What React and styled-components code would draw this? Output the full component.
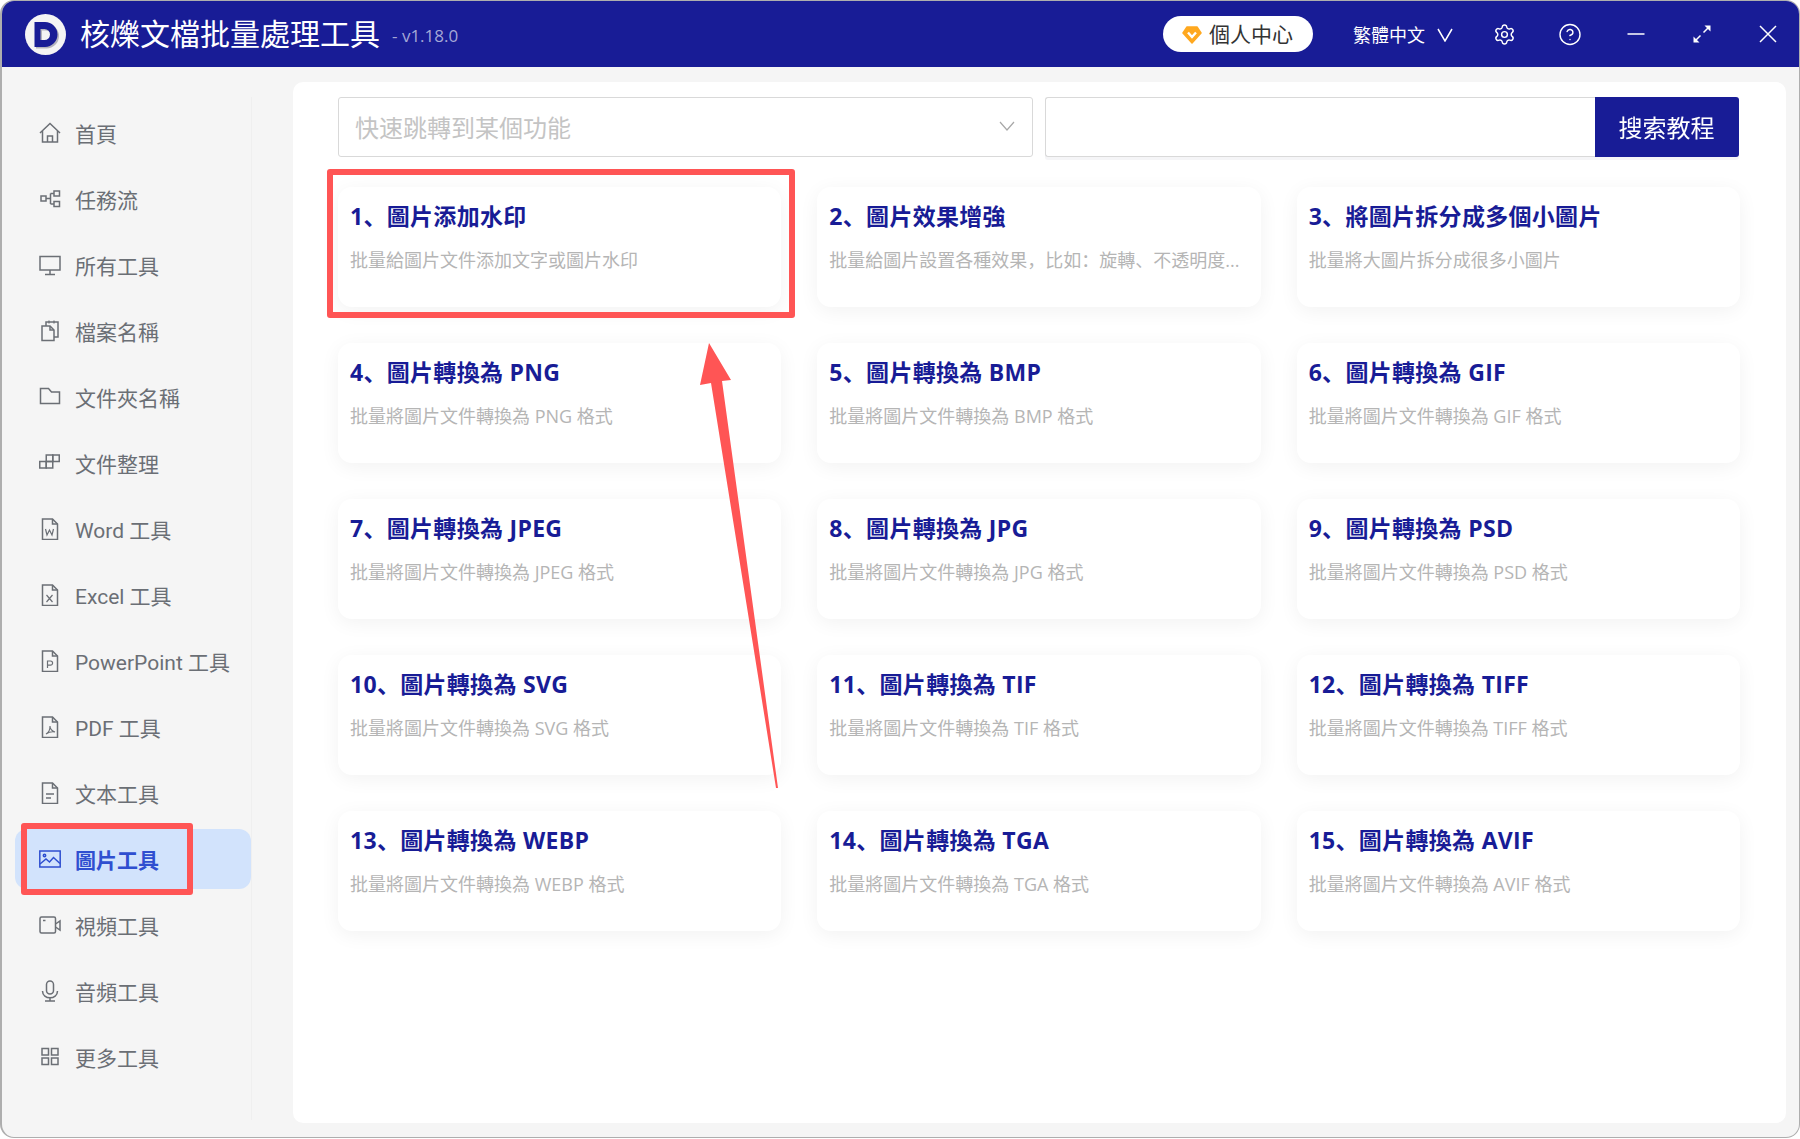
import React from 'react';
import styled, {createGlobalStyle} from 'styled-components';
import {Settings, CircleHelp} from 'lucide-react';

const GlobalStyle = createGlobalStyle`
  html, body {
    margin: 0;
    padding: 0;
    background: #fff;
  }
  * {
    box-sizing: border-box;
  }
`

const FONT = `"Open Sans", "Noto Sans CJK SC", sans-serif`
const NAVY = '#181c96'
const RED = '#ff5555'

const Page = styled.div`
  position: relative;
  width: 1800px;
  height: 1139px;
  font-family: ${FONT};
  overflow: hidden;
`
const Frame = styled.div`
  display: flex;
  flex-direction: column;
  height: 1138px;
  border: solid #aeaeae;
  border-width: 1px 1.5px 1.5px 2px;
  border-radius: 14px;
  background: #f5f5f5;
  overflow: hidden;
`
const TitleBar = styled.header`
  display: flex;
  align-items: center;
  flex: 0 0 66px;
  padding-left: 23px;
  background: ${NAVY};
  color: #fff;
`
const Logo = styled.svg`
  width: 41px;
  height: 41px;
  margin-right: 14px;
`
const AppName = styled.div`
  font-size: 30px;
  line-height: 40px;
`
const Version = styled.div`
  margin-left: 12px;
  margin-top: 3px;
  font-size: 17px;
  color: #a4a7d6;
`
const HeaderRight = styled.div`
  display: flex;
  align-items: center;
  margin-left: auto;
  padding-right: 19px;
`
const VipPill = styled.div`
  display: flex;
  align-items: center;
  gap: 7px;
  width: 150px;
  height: 36px;
  padding: 0 0 3px 19px;
  border-radius: 18px;
  background: #fff;
  color: #333;
  font-size: 21px;
`
const VipGem = styled.svg`
  width: 20px;
  height: 18px;
  margin-top: 4px;
`
const LangSwitch = styled.div`
  display: flex;
  align-items: center;
  gap: 12px;
  margin-left: 40px;
  margin-right: 39px;
  font-size: 18px;
`
const WinButton = styled.div`
  display: flex;
  align-items: center;
  justify-content: center;
  width: 24px;
  height: 24px;
  margin-right: 42px;

  &:last-child {
    margin-right: 0;
  }
`
const HeaderIcon = styled.svg`
  width: ${props => props.$size || 24}px;
  height: ${props => props.$size || 24}px;
  fill: none;
  stroke: #fff;
  stroke-width: 1.5;
`
const Body = styled.div`
  display: flex;
  flex: 1;
  min-height: 0;
`
const Sidebar = styled.nav`
  flex: 0 0 250px;
  height: 1023px;
  margin-top: 30px;
  padding: 6px 0 0 13px;
  border-right: 1px solid #efefef;
`
const NavItem = styled.div`
  position: relative;
  display: flex;
  align-items: center;
  gap: 14px;
  width: 236px;
  height: 60px;
  margin-bottom: 6px;
  padding: 0 0 1px 24px;
  border-radius: 12px;
  background: ${props => props.$active ? '#d2e3fc' : 'transparent'};
  color: ${props => props.$active ? '#2f4fd0' : '#6b6f75'};
  font-family: Roboto, "Noto Sans CJK SC", sans-serif;
  font-size: 21px;
  font-weight: ${props => props.$active ? 700 : 400};
`
const NavIcon = styled.svg`
  flex: 0 0 22px;
  width: 22px;
  height: 22px;
  fill: none;
  stroke: currentColor;
  stroke-width: 1.5;
`
const Panel = styled.main`
  flex: 1;
  margin: 15px 13px 14px 41px;
  padding: 15px 45px 0;
  border-radius: 10px;
  background: #fff;
`
const SearchRow = styled.div`
  display: flex;
  gap: 12px;
  height: 60px;
`
const JumpSelect = styled.div`
  display: flex;
  align-items: center;
  justify-content: space-between;
  flex: 0 0 695px;
  padding: 0 17px 2px 16px;
  border: 1px solid #d9d9d9;
  border-radius: 3px;
  color: #c4c4c4;
  font-size: 24px;
`
const SearchBox = styled.div`
  display: flex;
  flex: 1;
  margin-right: 2.500px;
  filter: drop-shadow(0 3px 0 #f5f5f7);
`
const SearchInput = styled.div`
  flex: 1;
  border: 1px solid #d9d9d9;
  border-right: 0;
  border-radius: 3px 0 0 3px;
  background: #fff;
`
const SearchButton = styled.div`
  display: flex;
  align-items: center;
  justify-content: center;
  flex: 0 0 144px;
  padding-bottom: 2px;
  border-radius: 0 3px 3px 0;
  background: ${NAVY};
  color: #fff;
  font-size: 24px;
`
const ToolGrid = styled.div`
  display: grid;
  grid-template-columns: repeat(3, minmax(0, 1fr));
  grid-auto-rows: 120px;
  gap: 36px;
  margin: 30px 1px 0 0;
`
const ToolCard = styled.div`
  position: relative;
  padding: 11px 12px 0;
  border-radius: 14px;
  background: #fff;
  box-shadow: 0 4px 20px rgba(0, 0, 0, 0.055);
`
const ToolTitle = styled.div`
  font-size: 23px;
  letter-spacing: 0.3px;
  line-height: 36px;
  font-weight: 700;
  color: ${NAVY};
  white-space: nowrap;
`
const ToolDesc = styled.div`
  margin-top: 12px;
  font-size: 18px;
  line-height: 28px;
  color: #b5b5b5;
  white-space: nowrap;
`
const Highlight = styled.div`
  position: absolute;
  top: ${props => props.$top}px;
  left: ${props => props.$left}px;
  right: ${props => props.$right}px;
  bottom: ${props => props.$bottom}px;
  border: 6px solid ${RED};
  border-radius: 3px;
  pointer-events: none;
`
const ArrowLayer = styled.svg`
  position: absolute;
  top: 0;
  left: 0;
  width: 1800px;
  height: 1139px;
  pointer-events: none;
`

const navItems = [
    {label: '首頁', icon: <><path d="M1 11 11 1.500 21 11"/><path d="M3.500 9v11h15V9"/><path d="M8.500 20v-6h5v6"/></>},
    {label: '任務流', icon: <><rect x="2" y="8" width="5" height="5"/><rect x="15" y="3" width="5.500" height="5"/><rect x="15" y="13.500" width="5.500" height="5"/><path d="M7 10.500h4.500M11.500 5.500v10.500M11.500 5.500H15M11.500 16H15"/></>},
    {label: '所有工具', icon: <><rect x="1" y="2.500" width="20" height="13.500"/><path d="M11 16v4M6 20.500h10"/></>},
    {label: '檔案名稱', icon: <><path d="M3 6h8l4 4v10.500H3z"/><path d="M11 6v4h4"/><path d="M7 6V2h12v15h-4"/><path d="M10 .5v3M15 .5v3" strokeWidth="1.200"/></>},
    {label: '文件夾名稱', icon: <path d="M1.500 2.500h8l3 3.500h8v11.500h-19z"/>},
    {label: '文件整理', icon: <><rect x="0.750" y="9.500" width="6.500" height="6.500"/><rect x="7.250" y="9.500" width="6.500" height="6.500"/><rect x="7.250" y="3" width="6.500" height="6.500"/><rect x="13.750" y="3" width="6.500" height="6.500"/></>},
    {label: 'Word 工具', letter: 'W'},
    {label: 'Excel 工具', letter: 'X'},
    {label: 'PowerPoint 工具', letter: 'P'},
    {label: 'PDF 工具', icon: <><path d="M3.500 1h10l5 5v15.500h-15z"/><path d="M13.500 1v5h5"/><path d="M7 18c2-1 4-4 4-8 0 3 2 5 5 6-3-.5-6 0-9 2z" strokeWidth="1.100"/></>},
    {label: '文本工具', icon: <><path d="M3.500 1h10l5 5v15.500h-15z"/><path d="M13.500 1v5h5"/><path d="M7 12h8M7 16h5"/></>},
    {label: '圖片工具', active: true, icon: <><rect x="0.800" y="3" width="20.400" height="16"/><circle cx="5.500" cy="7.500" r="1.200"/><path d="M1 16l6-5 3.500 3 4-4.500 6.500 6"/></>},
    {label: '視頻工具', icon: <><rect x="1" y="3" width="15.500" height="16" rx="1.500"/><path d="M16.500 10l4.500-3v9l-4.500-3"/><path d="M4 6.500h2.500"/></>},
    {label: '音頻工具', icon: <><rect x="7.500" y="1" width="7" height="13" rx="3.500"/><path d="M3.500 11c0 9 15 9 15 0M11 18v3.500M6 21h10"/></>},
    {label: '更多工具', icon: <><rect x="3" y="2.500" width="6.500" height="6.500"/><rect x="12.500" y="2.500" width="6.500" height="6.500"/><rect x="3" y="12" width="6.500" height="6.500"/><rect x="12.500" y="12" width="6.500" height="6.500"/></>},
]

const tools = [
    {title: '1、圖片添加水印', desc: '批量給圖片文件添加文字或圖片水印', marked: true},
    {title: '2、圖片效果增強', desc: '批量給圖片設置各種效果，比如：旋轉、不透明度...'},
    {title: '3、將圖片拆分成多個小圖片', desc: '批量將大圖片拆分成很多小圖片'},
    {title: '4、圖片轉換為 PNG', desc: '批量將圖片文件轉換為 PNG 格式'},
    {title: '5、圖片轉換為 BMP', desc: '批量將圖片文件轉換為 BMP 格式'},
    {title: '6、圖片轉換為 GIF', desc: '批量將圖片文件轉換為 GIF 格式'},
    {title: '7、圖片轉換為 JPEG', desc: '批量將圖片文件轉換為 JPEG 格式'},
    {title: '8、圖片轉換為 JPG', desc: '批量將圖片文件轉換為 JPG 格式'},
    {title: '9、圖片轉換為 PSD', desc: '批量將圖片文件轉換為 PSD 格式'},
    {title: '10、圖片轉換為 SVG', desc: '批量將圖片文件轉換為 SVG 格式'},
    {title: '11、圖片轉換為 TIF', desc: '批量將圖片文件轉換為 TIF 格式'},
    {title: '12、圖片轉換為 TIFF', desc: '批量將圖片文件轉換為 TIFF 格式'},
    {title: '13、圖片轉換為 WEBP', desc: '批量將圖片文件轉換為 WEBP 格式'},
    {title: '14、圖片轉換為 TGA', desc: '批量將圖片文件轉換為 TGA 格式'},
    {title: '15、圖片轉換為 AVIF', desc: '批量將圖片文件轉換為 AVIF 格式'},
]

const FileGlyph = ({letter}) => (
    <>
        <path d="M3.500 1h10l5 5v15.500h-15z"/>
        <path d="M13.500 1v5h5"/>
        {letter === 'W' && <path d="M6.500 11l1.500 6 2.500-5 2.500 5 1.500-6" strokeWidth="1.200"/>}
        {letter === 'X' && <path d="M7.500 11l6 7M13.500 11l-6 7" strokeWidth="1.200"/>}
        {letter === 'P' && <path d="M8.500 18v-7h3a2 2 0 0 1 0 4.200h-3" strokeWidth="1.200"/>}
    </>
)

const D_SHAPE = 'M9.500 8H20a12.500 12.500 0 0 1 0 25H9.500zM15.500 15v11h4a5.500 5.500 0 0 0 0-11z'

const App = () => {
    return (
        <Page>
            <GlobalStyle/>
            <Frame>
                <TitleBar>
                    <Logo viewBox="0 0 41 41">
                        <circle cx="20.500" cy="20.500" r="20.500" fill="#f4f4f4"/>
                        <path d={D_SHAPE} fill="#b4b4bc" fillRule="evenodd" transform="translate(1.500 1.500)"/>
                        <path d={D_SHAPE} fill="#181c96" fillRule="evenodd"/>
                    </Logo>
                    <AppName>核爍文檔批量處理工具</AppName>
                    <Version>- v1.18.0</Version>
                    <HeaderRight>
                        <VipPill>
                            <VipGem viewBox="0 0 20 18">
                                <path d="M5 1h10l4 6-9 10L1 7z" fill="#ffa81f" stroke="#ffa81f" strokeWidth="1.500" strokeLinejoin="round"/>
                                <path d="M6 6.500l4 4.500 4-4.500" fill="none" stroke="#fff" strokeWidth="2.400"/>
                            </VipGem>
                            個人中心
                        </VipPill>
                        <LangSwitch>
                            繁體中文
                            <HeaderIcon $size={16} viewBox="0 0 16 16"><path d="M1 3l7 12 7-12"/></HeaderIcon>
                        </LangSwitch>
                        <WinButton><Settings size={23} strokeWidth={1.500} color="#fff"/></WinButton>
                        <WinButton><CircleHelp size={25} strokeWidth={1.400} color="#fff"/></WinButton>
                        <WinButton>
                            <HeaderIcon viewBox="0 0 24 24"><path d="M3.500 12h17"/></HeaderIcon>
                        </WinButton>
                        <WinButton>
                            <HeaderIcon viewBox="0 0 24 24">
                                <path d="M5.500 18.500l5-5M13.500 10.500l5-5"/>
                                <path d="M20.500 3.500v6l-6-6zM3.500 20.500v-6l6 6z" fill="#fff" stroke="none"/>
                            </HeaderIcon>
                        </WinButton>
                        <WinButton>
                            <HeaderIcon viewBox="0 0 24 24"><path d="M4 4l16 16M20 4L4 20"/></HeaderIcon>
                        </WinButton>
                    </HeaderRight>
                </TitleBar>
                <Body>
                    <Sidebar>
                        {navItems.map(item => (
                            <NavItem key={item.label} $active={item.active}>
                                <NavIcon viewBox="0 0 22 22">
                                    {item.letter ? <FileGlyph letter={item.letter}/> : item.icon}
                                </NavIcon>
                                {item.label}
                                {item.active && <Highlight $top={-6} $left={6} $right={58} $bottom={-6}/>}
                            </NavItem>
                        ))}
                    </Sidebar>
                    <Panel>
                        <SearchRow>
                            <JumpSelect>
                                快速跳轉到某個功能
                                <svg width="16" height="10" viewBox="0 0 16 10" fill="none" stroke="#a8a8a8" strokeWidth="1.200">
                                    <path d="M1 1l7 8 7-8"/>
                                </svg>
                            </JumpSelect>
                            <SearchBox>
                                <SearchInput/>
                                <SearchButton>搜索教程</SearchButton>
                            </SearchBox>
                        </SearchRow>
                        <ToolGrid>
                            {tools.map(tool => (
                                <ToolCard key={tool.title}>
                                    <ToolTitle>{tool.title}</ToolTitle>
                                    <ToolDesc>{tool.desc}</ToolDesc>
                                    {tool.marked && <Highlight $top={-18} $left={-11} $right={-14} $bottom={-11}/>}
                                </ToolCard>
                            ))}
                        </ToolGrid>
                    </Panel>
                </Body>
            </Frame>
            <ArrowLayer viewBox="0 0 1800 1139">
                <path d="M709 343 731 380 722 381 778 788 776 788 711 383 700 385z" fill={RED}/>
            </ArrowLayer>
        </Page>
    )
}
export default App
